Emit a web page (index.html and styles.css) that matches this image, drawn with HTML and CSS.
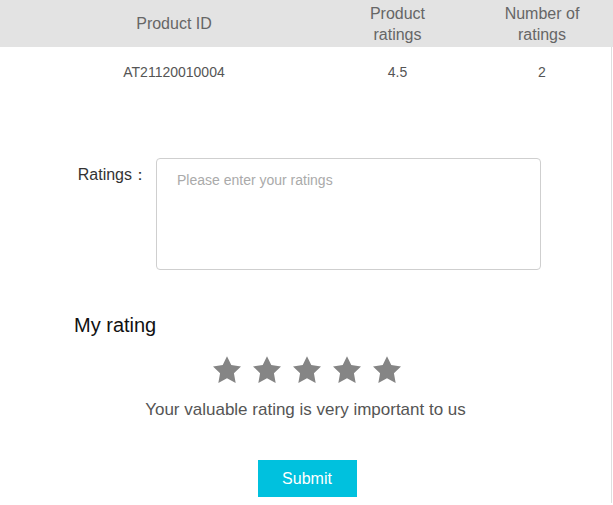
FILE: index.html
```html
<!DOCTYPE html>
<html>
<head>
<meta charset="utf-8">
<link rel="stylesheet" href="styles.css">
</head>
<body>
<div class="page">
  <div class="table">
    <div class="thead">
      <div class="cell c1">Product ID</div>
      <div class="cell c2">Product<br>ratings</div>
      <div class="cell c3">Number of<br>ratings</div>
    </div>
  </div>
  <div class="body">
    <div class="table">
      <div class="trow">
        <div class="cell c1">AT21120010004</div>
        <div class="cell c2">4.5</div>
        <div class="cell c3">2</div>
      </div>
    </div>
    <div class="content">
      <div class="form-row">
        <label class="label">Ratings：</label>
        <textarea class="input" placeholder="Please enter your ratings"></textarea>
      </div>
      <h2 class="title">My rating</h2>
      <div class="stars">
        <svg viewBox="0 0 24 24" class="star"><path d="M12 1.6l3.2 6.7 7.3 1-5.3 5.1 1.3 7.3L12 18.2l-6.5 3.5 1.3-7.3L1.5 9.3l7.3-1z"/></svg>
        <svg viewBox="0 0 24 24" class="star"><path d="M12 1.6l3.2 6.7 7.3 1-5.3 5.1 1.3 7.3L12 18.2l-6.5 3.5 1.3-7.3L1.5 9.3l7.3-1z"/></svg>
        <svg viewBox="0 0 24 24" class="star"><path d="M12 1.6l3.2 6.7 7.3 1-5.3 5.1 1.3 7.3L12 18.2l-6.5 3.5 1.3-7.3L1.5 9.3l7.3-1z"/></svg>
        <svg viewBox="0 0 24 24" class="star"><path d="M12 1.6l3.2 6.7 7.3 1-5.3 5.1 1.3 7.3L12 18.2l-6.5 3.5 1.3-7.3L1.5 9.3l7.3-1z"/></svg>
        <svg viewBox="0 0 24 24" class="star"><path d="M12 1.6l3.2 6.7 7.3 1-5.3 5.1 1.3 7.3L12 18.2l-6.5 3.5 1.3-7.3L1.5 9.3l7.3-1z"/></svg>
      </div>
      <p class="note">Your valuable rating is very important to us</p>
      <div class="actions"><button class="submit">Submit</button></div>
    </div>
  </div>
</div>
</body>
</html>
```
FILE: styles.css
```css
* { box-sizing: border-box; }
html, body { margin: 0; padding: 0; background: #fff; }
body { font-family: "Liberation Sans", Arial, sans-serif; overflow: hidden; }
.page { width: 613px; height: 505px; overflow: hidden; }
.table { width: 100%; overflow: hidden; }
.thead, .trow { display: grid; grid-template-columns: 348px 99px 190px; width: 637px; }
.thead { background: #e3e3e3; height: 47px; color: #666; font-size: 16px; line-height: 21px; }
.thead .cell { display: flex; align-items: center; justify-content: center; text-align: center; }
.trow { height: 52px; color: #555; font-size: 14px; padding-top: 17px; }
.cell { text-align: center; }
.body { width: 612px; border-right: 1px solid #dedede; height: 456px; }
.content { padding-top: 59px; }
.form-row { display: flex; align-items: flex-start; }
.label { width: 148px; text-align: right; font-size: 16px; color: #333; padding-top: 7px; white-space: nowrap; }
.input { margin-left: 8px; width: 385px; height: 112px; border: 1px solid #cfcfcf; border-radius: 4px; padding: 13px 20px; font-family: inherit; font-size: 14px; resize: none; outline: none; color: #333; }
.input::placeholder { color: #aaa; }
.title { margin: 43px 0 0 74px; font-size: 20px; font-weight: normal; color: #111; line-height: 24px; }
.stars { display: flex; justify-content: center; gap: 8px; margin-top: 17px; padding-left: 3px; }
.star { width: 32px; height: 32px; fill: #858585; }
.note { margin: 13px 0 0; text-align: center; font-size: 17px; color: #555; line-height: 21px; }
.actions { display: flex; justify-content: center; margin-top: 40px; padding-left: 3px; }
.submit { width: 99px; height: 37px; border: none; background: #00c1de; color: #fff; font-family: inherit; font-size: 16px; cursor: pointer; }
```
